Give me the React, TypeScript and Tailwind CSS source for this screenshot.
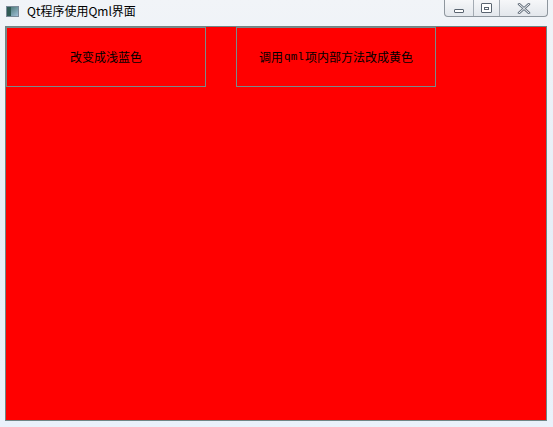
import React from "react";

export default function App() {
  const font = { fontFamily: '"Noto Sans CJK SC", "Liberation Sans", sans-serif' };
  return (
    <div
      className="w-[553px] h-[427px] flex flex-col overflow-hidden bg-gradient-to-b from-[#f1f4f8] via-[#e6eef7] to-[#eaf2fb]"
      style={font}
    >
      {/* title bar */}
      <div className="h-[26px] flex items-start relative">
        <div className="ml-[6px] mt-[6px] w-[13px] h-[11px] border border-[#7a8a99] bg-gradient-to-br from-[#3f6f6a] to-[#9fc0d8] flex">
          <div className="w-[4px] h-full bg-[#2f5b55]" />
        </div>
        <span className="ml-[8px] mt-[3px] text-[12px] leading-[16px] text-black">Qt程序使用Qml界面</span>
        <div className="absolute left-[444px] top-0 w-[104px] h-[17px] flex border border-t-0 border-[#8e969e] rounded-b-[4px] bg-gradient-to-b from-[#f6f7f9] to-[#e3e7ec]">
          <div className="w-[29px] h-full flex items-center justify-center border-r border-[#a4abb3]">
            <div className="w-[10px] h-[4px] mt-[5px] border border-[#5a6470] rounded-[1px] bg-white" />
          </div>
          <div className="w-[26px] h-full flex items-center justify-center border-r border-[#a4abb3]">
            <div className="w-[11px] h-[10px] border border-[#5a6470] rounded-[1px] flex items-center justify-center bg-white">
              <div className="w-[5px] h-[3px] border border-[#5a6470]" />
            </div>
          </div>
          <div className="flex-1 h-full flex items-center justify-center">
            <svg width="14" height="11" viewBox="0 0 14 11">
              <path d="M2 1 L12 10 M12 1 L2 10" stroke="#6a7480" strokeWidth="2.6" strokeLinecap="round" />
              <path d="M2 1 L12 10 M12 1 L2 10" stroke="#f4f6f8" strokeWidth="1" strokeLinecap="round" />
            </svg>
          </div>
        </div>
      </div>
      {/* client */}
      <div className="ml-[5px] w-[542px] h-[395px] border border-[#6f8585] bg-[#ff0000]">
        <div className="flex gap-[30px]">
          <div className="w-[200px] h-[60px] border border-[#7a8a8a] flex items-center justify-center text-[12px] text-black">
            改变成浅蓝色
          </div>
          <div className="w-[200px] h-[60px] border border-[#7a8a8a] flex items-center justify-center text-[12px] text-black">
            调用<span style={{ fontFamily: '"Liberation Mono", monospace' }} className="text-[11px] mx-[1px]">qml</span>项内部方法改成黄色
          </div>
        </div>
      </div>
    </div>
  );
}
